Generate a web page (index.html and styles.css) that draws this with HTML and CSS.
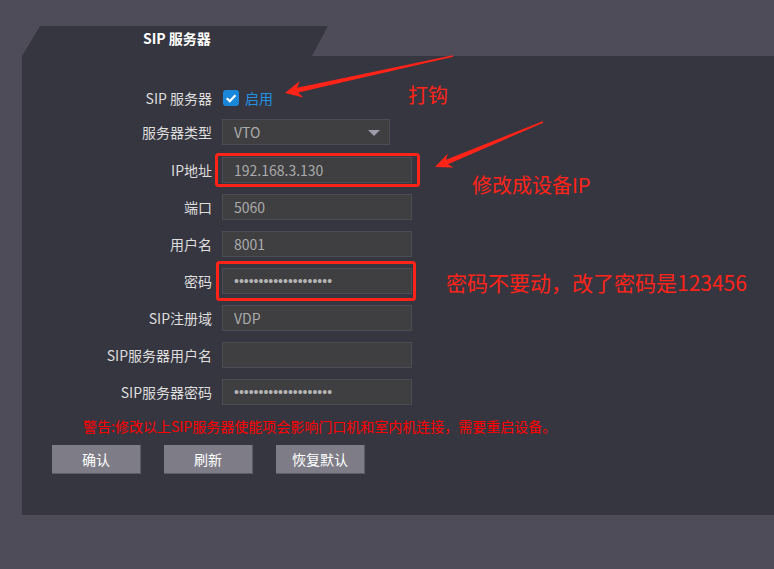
FILE: index.html
```html
<!DOCTYPE html>
<html lang="zh-CN">
<head>
  <meta charset="UTF-8">
  <meta name="viewport" content="width=device-width, initial-scale=1.0">
  <title>SIP 服务器</title>
  <link rel="stylesheet" href="styles.css">
</head>
<body>
  <div class="page">
    <div class="tab">SIP 服务器</div>
    <div class="panel">
      <div class="row row-first">
        <label>SIP 服务器</label>
        <div class="check">
          <span class="box">
            <svg width="16" height="16" viewBox="0 0 16 16"><path d="M3.8 8.2 L6.8 11.2 L12.4 5.2" fill="none" stroke="#fff" stroke-width="2.2"/></svg>
          </span>
          <span class="check-text">启用</span>
        </div>
      </div>
      <div class="row row-select">
        <label>服务器类型</label>
        <div class="select">VTO</div>
      </div>
      <div class="row">
        <label for="ip">IP地址</label>
        <input type="text" id="ip" value="192.168.3.130">
      </div>
      <div class="row">
        <label for="port">端口</label>
        <input type="text" id="port" value="5060">
      </div>
      <div class="row">
        <label for="user">用户名</label>
        <input type="text" id="user" value="8001">
      </div>
      <div class="row">
        <label for="pwd">密码</label>
        <input type="password" id="pwd" class="pwd" value="xxxxxxxxxxxxxxxxxxxx">
      </div>
      <div class="row">
        <label for="domain">SIP注册域</label>
        <input type="text" id="domain" value="VDP">
      </div>
      <div class="row">
        <label for="sipuser">SIP服务器用户名</label>
        <input type="text" id="sipuser" value="">
      </div>
      <div class="row">
        <label for="sippwd">SIP服务器密码</label>
        <input type="password" id="sippwd" class="pwd" value="xxxxxxxxxxxxxxxxxxxx">
      </div>
      <p class="warn">警告:修改以上SIP服务器使能项会影响门口机和室内机连接，需要重启设备。</p>
      <div class="buttons">
        <button>确认</button>
        <button>刷新</button>
        <button>恢复默认</button>
      </div>
    </div>
  </div>

  <!-- 红色标注 -->
  <div class="notes">
    <svg width="774" height="569" viewBox="0 0 774 569">
      <g fill="none" stroke="#ff2318" stroke-width="3">
        <rect x="216.5" y="154.5" width="202" height="31" rx="2"/>
        <rect x="217.5" y="262.5" width="197" height="37" rx="2"/>
      </g>
      <g fill="#ff2318">
        <polygon points="285,93 299.8,81 297.2,87.8 452.8,55.2 453.2,56.8 298.2,92.6 303.4,97.6"/>
        <polygon points="435,167 447.8,153.6 446,159.7 542.7,121.3 543.3,122.7 448,164.3 453.6,167.4"/>
      </g>
    </svg>
    <span class="note note-1">打钩</span>
    <span class="note note-2">修改成设备IP</span>
    <span class="note note-3">密码不要动，改了密码是123456</span>
  </div>
</body>
</html>
```

FILE: styles.css
```css
body {
  margin: 0;
  background-color: #4e4c59;
  font-family: "Noto Sans CJK SC", "Liberation Sans", sans-serif;
  font-size: 14px;
}
.page {
  padding: 26px 0 0 22px;
}
.tab {
  width: 306px;
  height: 30px;
  box-sizing: border-box;
  padding-left: 121px;
  line-height: 24px;
  background-color: #363640;
  color: #fff;
  font-weight: bold;
  clip-path: polygon(18px 0, 306px 0, 290px 30px, 0 30px);
}
.panel {
  height: 459px;
  box-sizing: border-box;
  padding-top: 29px;
  background-color: #363640;
}
.row {
  display: grid;
  grid-template-columns: 190px 190px;
  column-gap: 10px;
  align-items: center;
  height: 26px;
  margin-bottom: 11px;
}
.row-first {
  margin-bottom: 8px;
}
.row-select {
  margin-bottom: 12px;
}
label {
  text-align: right;
  color: #dedede;
  line-height: 20px;
}
input,
.select {
  box-sizing: border-box;
  width: 190px;
  height: 26px;
  padding: 0 0 0 11px;
  background-color: #3f3f42;
  border: 1px solid #4c4c55;
  color: #ababab;
  font-family: "Noto Sans CJK SC", "Liberation Sans", sans-serif;
  font-size: 14px;
  outline: none;
}
.pwd {
  font-family: "Liberation Sans", sans-serif;
  color: #b4b4b4;
}
.select {
  position: relative;
  width: 168px;
  line-height: 24px;
}
.select::after {
  content: "";
  position: absolute;
  right: 9px;
  top: 10px;
  border-left: 6.5px solid transparent;
  border-right: 6.5px solid transparent;
  border-top: 6.5px solid #9d9ca8;
}
.check {
  display: flex;
  align-items: center;
  gap: 6px;
  padding-left: 1px;
}
.box {
  display: block;
  width: 16px;
  height: 16px;
  border-radius: 3px;
  background-color: #1b87da;
}
.box svg {
  display: block;
}
.check-text {
  color: #2191e2;
  line-height: 20px;
}
.warn {
  margin: 1px 0 0 61px;
  line-height: 20px;
  color: #ff0000;
}
.buttons {
  display: flex;
  gap: 23px;
  margin: 9px 0 0 30px;
}
button {
  width: 89px;
  height: 29px;
  padding: 0;
  background-color: #7e7d87;
  border: none;
  border-right: 1px solid #5c5b68;
  border-bottom: 1px solid #5c5b68;
  color: #fff;
  font-family: "Noto Sans CJK SC", "Liberation Sans", sans-serif;
  font-size: 14px;
}
.notes {
  position: absolute;
  top: 0;
  left: 0;
  width: 774px;
  height: 569px;
  pointer-events: none;
}
.notes svg {
  display: block;
}
.note {
  position: absolute;
  color: #ff2318;
  font-size: 20px;
  line-height: 20px;
  white-space: nowrap;
}
.note-1 {
  left: 408px;
  top: 85px;
}
.note-2 {
  left: 472px;
  top: 175px;
}
.note-3 {
  left: 446px;
  top: 272px;
  font-size: 21px;
  line-height: 21px;
}
```
